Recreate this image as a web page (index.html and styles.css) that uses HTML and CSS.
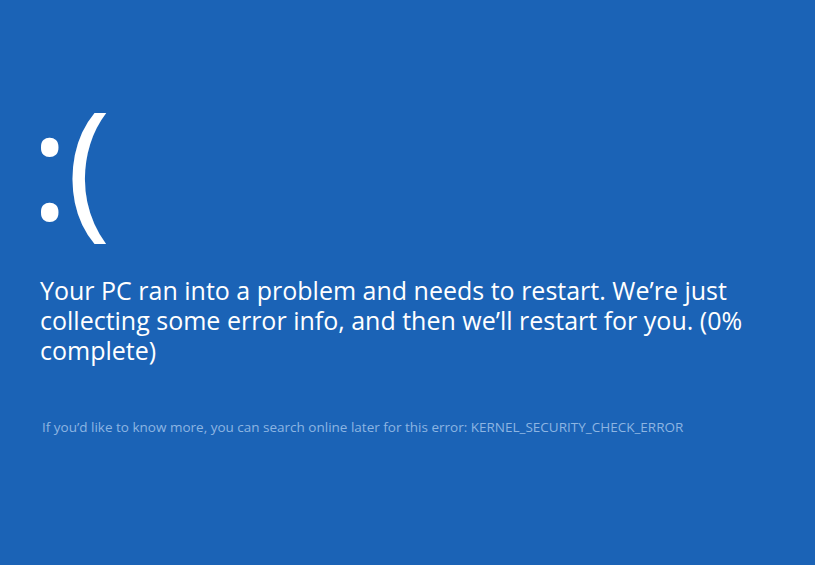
FILE: index.html
```html
<!DOCTYPE html>
<html lang="en">
<head>
    <meta charset="UTF-8">
    <title>Blue Screen</title>
    <link rel="stylesheet" href="styles.css">
</head>
<body>
    <div class="screen">
        <div class="face">:<span class="mouth">(</span></div>
        <p class="message">Your PC ran into a problem and needs to restart. We’re just collecting some error info, and then we’ll restart for you. (0% complete)</p>
        <p class="details">If you’d like to know more, you can search online later for this error: KERNEL_SECURITY_CHECK_ERROR</p>
    </div>
</body>
</html>
```

FILE: styles.css
```css
* { margin: 0; padding: 0; box-sizing: border-box; }
html, body { height: 100%; }
body {
    background: #1b63b6;
    color: #fff;
    font-family: 'Open Sans', 'Noto Sans', sans-serif;
    overflow: hidden;
}
.screen {
    padding: 87px 40px 0 40px;
}
.face {
    font-weight: 400;
    font-size: 150px;
    line-height: 150px;
    height: 150px;
    margin-left: -10px;
}
.mouth { margin-left: -3px; }
.message {
    font-size: 25px;
    line-height: 30px;
    max-width: 720px;
    margin-top: 38px;
}
.details {
    margin-top: 53px;
    padding-left: 2px;
    font-size: 13.5px;
    line-height: 18px;
    color: #8db5e2;
}
```
